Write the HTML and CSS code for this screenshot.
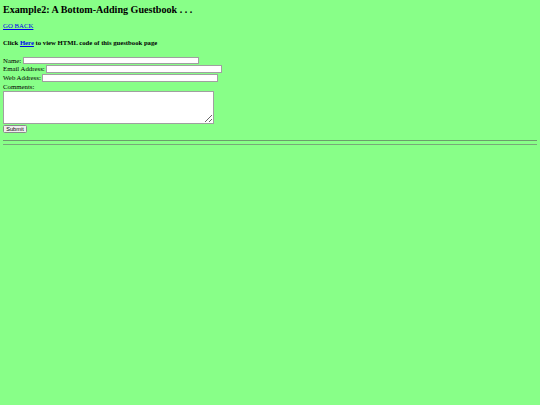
FILE: index.html
```html
<!DOCTYPE html>
<html>
<head>
<meta charset="utf-8">
<title>Guestbook</title>
<link rel="stylesheet" href="styles.css">
</head>
<body>
<h2 class="title">Example2: A Bottom-Adding Guestbook . . .</h2>
<p class="back"><a href="#">GO BACK</a></p>
<h4 class="click">Click <a href="#">Here</a> to view HTML code of this guestbook page</h4>
<form class="gb">
  <div class="row">Name:&nbsp;<input type="text" class="field"></div>
  <div class="row">Email Address:&nbsp;<input type="text" class="field"></div>
  <div class="row">Web Address:&nbsp;<input type="text" class="field"></div>
  <div class="row">Comments:</div>
  <textarea class="comments"></textarea>
  <div class="btnrow"><button type="button" class="submit">Submit</button></div>
</form>
<div class="rule rule-a"></div>
<div class="rule rule-b"></div>
</body>
</html>
```
FILE: styles.css
```css
html, body {
  background: #88ff88;
}
body {
  margin: 0;
  padding: 3.6px 3px 0 3px;
  font-family: "Liberation Serif", "Times New Roman", serif;
  font-size: 6.8px;
  color: #000;
}
a {
  color: #0000ee;
}
.title {
  font-size: 10.1px;
  font-weight: bold;
  margin: 0;
  line-height: 12px;
}
.back {
  margin: 6.8px 0 0 0;
  line-height: 8px;
}
.click {
  font-size: 6.7px;
  font-weight: bold;
  margin: 8.3px 0 0 0;
  line-height: 8px;
}
.gb {
  margin: 9.6px 0 0 0;
}
.row {
  display: flex;
  align-items: center;
  height: 8.6px;
  line-height: 7.4px;
  white-space: nowrap;
}
.field {
  box-sizing: border-box;
  width: 176px;
  height: 7.7px;
  border: 1px solid #a0a0a0;
  background: #fff;
  padding: 0;
  margin: 0;
}
.comments {
  display: block;
  box-sizing: border-box;
  width: 211px;
  height: 33.3px;
  margin: 0;
  border: 1px solid #a0a0a0;
  background: #fff;
  padding: 0;
  resize: both;
}
.btnrow {
  display: flex;
  margin-top: 1px;
}
.submit {
  box-sizing: border-box;
  margin: 0;
  padding: 0;
  height: 8.3px;
  width: 24px;
  font-family: "Liberation Sans", Arial, sans-serif;
  font-size: 5.6px;
  line-height: 6px;
  background: #efefef;
  border: 1px solid #8a8a8a;
  border-radius: 1.5px;
  color: #000;
}
.rule {
  height: 0;
}
.rule-a {
  margin-top: 6.7px;
  border-top: 1px solid #6c9c6c;
}
.rule-b {
  margin-top: 3.5px;
  border-top: 1px solid #78a878;
}
```
